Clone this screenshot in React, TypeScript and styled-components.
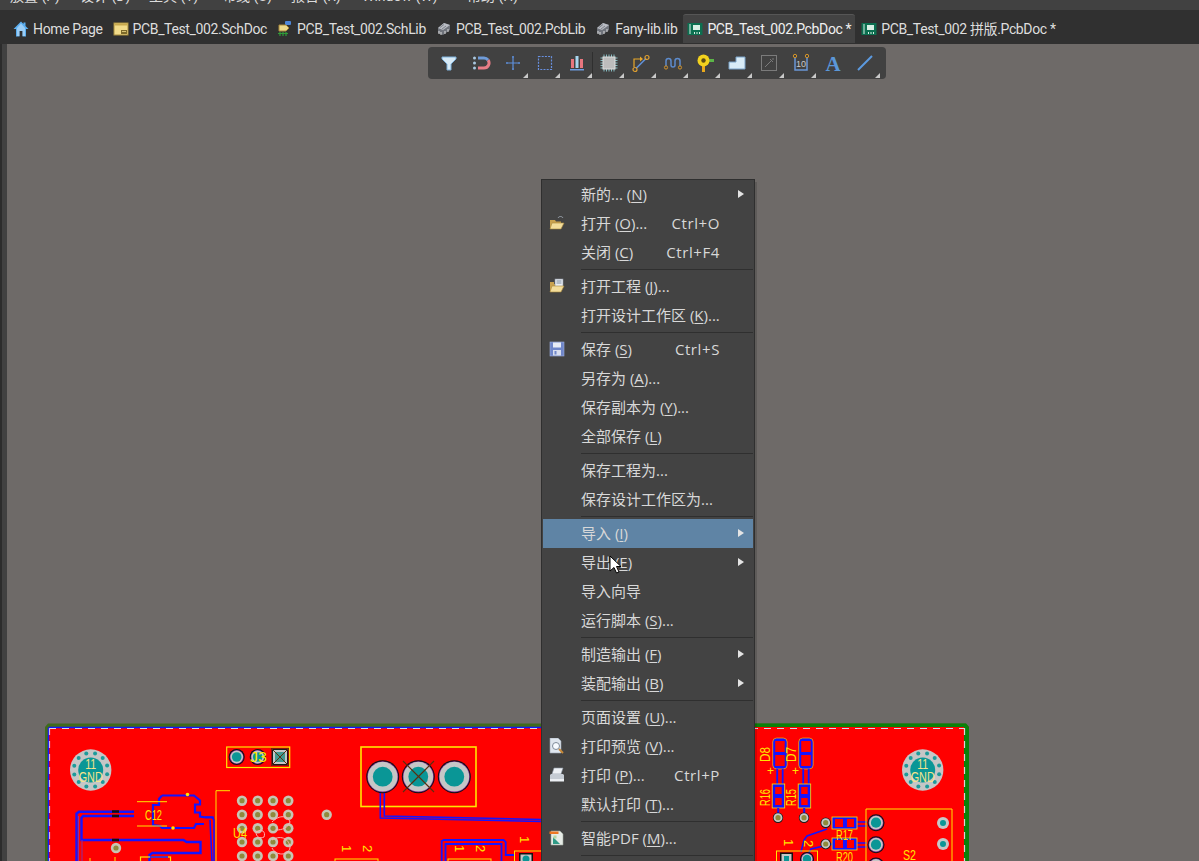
import React from 'react';
import styled, { createGlobalStyle } from 'styled-components';

const GlobalStyle = createGlobalStyle`
  html, body {
    margin: 0;
    height: 100%;
    overflow: hidden;
    background: #6e6a68;
  }
  #root {
    height: 100%;
  }
`;

const Page = styled.div`
  position: relative;
  display: flex;
  flex-direction: column;
  width: 1199px;
  height: 861px;
  overflow: hidden;
  font-family: Roboto, "Noto Sans CJK SC", sans-serif;
  color: #dcdcdc;
`;

const MenuBar = styled.div`
  flex: none;
  display: flex;
  height: 10px;
  overflow: hidden;
  background: #414141;
`;

const MenuBarItem = styled.span<{ $w: number }>`
  flex: none;
  width: ${(p) => p.$w}px;
  margin-top: -14px;
  font-size: 14px;
  line-height: 20px;
  white-space: nowrap;
  &:first-child {
    margin-left: 10px;
  }
`;

const TabBar = styled.div`
  flex: none;
  display: flex;
  gap: 2px;
  align-items: flex-end;
  height: 34px;
  padding: 0 0 1px 9px;
  box-sizing: border-box;
  background: #303030;
`;

const Tab = styled.div<{ $active?: boolean }>`
  display: flex;
  align-items: center;
  gap: 4px;
  height: 29px;
  padding: 0 4px;
  box-sizing: border-box;
  font-size: 14px;
  line-height: 20px;
  letter-spacing: -0.36px;
  white-space: nowrap;
  color: ${(p) => (p.$active ? '#f0f0f0' : '#dedede')};
  background: ${(p) => (p.$active ? '#434343' : 'transparent')};
  border-top: 1px solid ${(p) => (p.$active ? '#565656' : 'transparent')};
  border-radius: 3px 3px 0 0;
`;

const Workspace = styled.div`
  flex: 1;
  display: flex;
  min-height: 0;
`;

const LeftStrip = styled.div`
  flex: none;
  width: 7px;
  background: #414141;
  border-left: 2px solid #2c2c2c;
  box-sizing: border-box;
`;

const Canvas = styled.div`
  flex: 1;
  padding: 679px 0 0 38px;
  background: #6e6a68;
  overflow: hidden;
`;

const BoardSvg = styled.svg`
  display: block;
  width: 925px;
  height: 138px;
`;

const Toolbar = styled.div`
  position: absolute;
  top: 47px;
  left: 428px;
  display: flex;
  height: 32px;
  padding: 0 5px;
  background: #414141;
  border-radius: 4px;
`;

const ToolButton = styled.div<{ $corner?: boolean; $divider?: boolean }>`
  position: relative;
  display: flex;
  align-items: center;
  justify-content: center;
  width: 32px;
  height: 32px;
  &::before {
    content: '';
    display: ${(p) => (p.$corner ? 'block' : 'none')};
    position: absolute;
    right: 1px;
    bottom: 1px;
    border-style: solid;
    border-width: 0 0 5px 5px;
    border-color: transparent transparent #c9c9c9 transparent;
  }
  &::after {
    content: '';
    display: ${(p) => (p.$divider ? 'block' : 'none')};
    position: absolute;
    right: 0;
    top: 5px;
    bottom: 5px;
    width: 1px;
    background: #2f2f2f;
  }
`;

const Menu = styled.div`
  position: absolute;
  top: 179px;
  left: 541px;
  width: 214px;
  box-sizing: border-box;
  padding: 0 1px 12px;
  background: #434343;
  border: 1px solid #2f2f2f;
  box-shadow: 2px 3px 0 rgba(0, 0, 0, 0.14);
`;

const Row = styled.div<{ $on?: boolean }>`
  display: flex;
  align-items: center;
  height: 29px;
  box-sizing: border-box;
  padding: 0 9px 1px 6px;
  font-family: "Open Sans", "Noto Sans CJK SC", sans-serif;
  font-size: 15px;
  line-height: 20px;
  color: #d8d8d8;
  background: ${(p) => (p.$on ? '#5f84a5' : 'transparent')};
  u {
    text-underline-offset: 2px;
    text-decoration-thickness: 1px;
  }
`;

const RowIcon = styled.span`
  flex: none;
  display: flex;
  width: 16px;
  height: 16px;
  margin-right: 16px;
`;

const RowLabel = styled.span`
  flex: 1;
  white-space: nowrap;
`;

const Shortcut = styled.span`
  flex: none;
  white-space: nowrap;
  letter-spacing: 0.6px;
`;

const ArrowSlot = styled.span`
  flex: none;
  display: flex;
  justify-content: flex-end;
  width: 24px;
`;

const Arrow = styled.i<{ $show?: boolean }>`
  display: ${(p) => (p.$show ? 'block' : 'none')};
  border-style: solid;
  border-width: 4.5px 0 4.5px 6px;
  border-color: transparent transparent transparent #e4e4e4;
`;

const Separator = styled.div`
  height: 1px;
  margin: 2px 0 2px 38px;
  background: #2f2f2f;
`;

const Cursor = styled.svg`
  position: absolute;
  top: 555px;
  left: 609px;
  width: 13px;
  height: 19px;
`;

const BoardText = styled.text`
  font-family: 'Liberation Sans', sans-serif;
  fill: #ffe600;
`;

const HoleText = styled.text`
  font-family: 'Liberation Sans', sans-serif;
  fill: #f6e38c;
  text-anchor: middle;
`;

type Tool = { corner?: boolean; divider?: boolean; icon: React.ReactNode };

const Icon20 = ({ children }: { children: React.ReactNode }) => (
  <svg width="20" height="20" viewBox="0 0 20 20">{children}</svg>
);

const tools: Tool[] = [
  { icon: <Icon20><path d="M3 4h14v2l-5 5v6H8v-6L3 6z" fill="#d7eaf6" stroke="#7fb2dc" strokeWidth="1" /></Icon20> },
  { icon: (
    <Icon20>
      <circle cx="3.5" cy="5" r="1.5" fill="#a9c7df" />
      <circle cx="3.5" cy="10" r="1.5" fill="#a9c7df" />
      <circle cx="3.5" cy="15" r="1.5" fill="#a9c7df" />
      <path d="M7 15h6a5 5 0 0 0 4-8" fill="none" stroke="#e87d86" strokeWidth="3" />
      <path d="M7 5h6a5 5 0 0 1 4 2" fill="none" stroke="#6f9bd8" strokeWidth="3" />
    </Icon20>
  ) },
  { corner: true, icon: <Icon20><path d="M10 3v14M3 10h14" stroke="#5e90dc" strokeWidth="1.2" fill="none" /><path d="M9 4h2M9 16h2M4 9v2M16 9v2" stroke="#5e90dc" strokeWidth="1" fill="none" /></Icon20> },
  { corner: true, icon: <Icon20><rect x="3.5" y="3.5" width="13" height="13" fill="none" stroke="#6890e0" strokeWidth="1.2" strokeDasharray="2 1.2" /></Icon20> },
  { corner: true, divider: true, icon: (
    <Icon20>
      <rect x="4" y="6" width="3" height="9" fill="#e8767e" />
      <rect x="8.5" y="3" width="3" height="12" fill="#a7d6ef" />
      <rect x="13" y="6" width="3" height="9" fill="#e8767e" />
      <rect x="3" y="16" width="14" height="1.5" fill="#6d9be0" />
    </Icon20>
  ) },
  { corner: true, icon: (
    <Icon20>
      <path d="M5 1.5v17M7.5 1.5v17M10 1.5v17M12.5 1.5v17M15 1.5v17M1.5 5h17M1.5 7.5h17M1.5 10h17M1.5 12.5h17M1.5 15h17" stroke="#86bcc2" strokeWidth="1" />
      <rect x="4" y="4" width="12" height="12" fill="#bdbdbd" stroke="#dedede" />
    </Icon20>
  ) },
  { corner: true, icon: (
    <Icon20>
      <path d="M3 14V6h7" fill="none" stroke="#e8a72a" strokeWidth="1.2" />
      <path d="M9 3.5l3 2.5-3 2.5z" fill="#e8a72a" />
      <path d="M5 15.5L15 5.5" stroke="#5f8fd8" strokeWidth="1.6" />
      <circle cx="4" cy="16.5" r="2" fill="none" stroke="#e0a030" strokeWidth="1.2" />
      <circle cx="16" cy="4.5" r="2" fill="none" stroke="#e0a030" strokeWidth="1.2" />
    </Icon20>
  ) },
  { corner: true, icon: (
    <Icon20>
      <path d="M3 13V8a2.5 2.5 0 0 1 5 0v4a2 2 0 0 0 4 0V8a2.5 2.5 0 0 1 5 0v5" fill="none" stroke="#5d8bcc" strokeWidth="1.5" />
      <circle cx="3" cy="14.5" r="1.6" fill="none" stroke="#d3942a" />
      <circle cx="17" cy="14.5" r="1.6" fill="none" stroke="#d3942a" />
    </Icon20>
  ) },
  { corner: true, icon: (
    <Icon20>
      <rect x="7" y="13" width="3" height="6" fill="#e9a91c" />
      <rect x="12" y="6" width="7" height="3" fill="#5bb548" />
      <circle cx="8.5" cy="7.5" r="6" fill="#f3d21e" />
      <circle cx="8.5" cy="7.5" r="2.2" fill="#5c4b14" />
    </Icon20>
  ) },
  { corner: true, icon: <Icon20><path d="M2 9h7V4h9v12H2z" fill="#d9ecf7" stroke="#7aa3c9" strokeWidth="1" /></Icon20> },
  { corner: true, icon: (
    <Icon20>
      <rect x="2.5" y="2.5" width="15" height="15" fill="none" stroke="#7b7b7b" />
      <path d="M6 14l6-6M11 6l3 3M14 5v2" stroke="#7b7b7b" strokeWidth="1" fill="none" />
    </Icon20>
  ) },
  { corner: true, icon: (
    <Icon20>
      <path d="M4 4v13h12V4" fill="none" stroke="#6a96d6" strokeWidth="1.5" />
      <circle cx="4" cy="3" r="1.7" fill="#414141" stroke="#d3942a" />
      <circle cx="16" cy="3" r="1.7" fill="#414141" stroke="#d3942a" />
      <text x="10" y="14" fontSize="9" textAnchor="middle" fill="#c9c9c9" fontFamily="Liberation Sans, sans-serif">10</text>
    </Icon20>
  ) },
  { icon: (
    <Icon20>
      <text x="10" y="18" fontSize="21" fontWeight="700" textAnchor="middle" fill="#5b97d8" fontFamily="Liberation Serif, serif">A</text>
    </Icon20>
  ) },
  { corner: true, icon: <Icon20><path d="M3 17L17 3" stroke="#5c9ae0" strokeWidth="2" /></Icon20> },
];

const Icon16 = ({ children }: { children: React.ReactNode }) => (
  <svg width="16" height="16" viewBox="0 0 16 16">{children}</svg>
);

const HomeIcon = () => (
  <Icon16>
    <path d="M8 0.5L0.5 8H3v7.5h3.5V10h3v5.5H13V8h2.5L12.5 5V1.5h-2v1.5z" fill="#5aaef0" />
    <path d="M8 2.5L4 7v8h2.5v-5h3v5H12V7z" fill="#cfe8fb" opacity="0.55" />
  </Icon16>
);

const SchDocIcon = () => (
  <Icon16>
    <rect x="1" y="2" width="14" height="12" fill="#f2dc8a" stroke="#a88d3c" />
    <rect x="1.5" y="2.5" width="13" height="2" fill="#c8a94e" />
    <rect x="8" y="9" width="6" height="4" fill="#7d6a2a" />
    <rect x="9" y="10" width="4" height="0.8" fill="#f2dc8a" />
  </Icon16>
);

const SchLibIcon = () => (
  <Icon16>
    <rect x="8" y="0" width="6" height="4" rx="1" fill="#4d86d8" />
    <path d="M2 4h7l3 3-3 3H2z" fill="#ecd98a" stroke="#a9893a" />
    <path d="M3 11v4M6 11v4M9 11v4M1 12.5h10" stroke="#2f9a38" strokeWidth="1.2" />
  </Icon16>
);

const PcbLibIcon = () => (
  <Icon16>
    <path d="M2 7l6-5 6 2v5l-7 5-5-2z" fill="#6f737b" />
    <path d="M2 7l6-5 6 2-7 5z" fill="#b9bcc3" />
    <path d="M4 6.5l4-3M6 8l4-3" stroke="#6f737b" strokeWidth="0.8" />
    <path d="M3 10v3M5 11v3M9 10v3M12 8v3" stroke="#dcdcdc" strokeWidth="1" />
  </Icon16>
);

const PcbDocIcon = () => (
  <Icon16>
    <rect x="0.5" y="2" width="15" height="12" fill="#0c6f50" />
    <rect x="6" y="4" width="7" height="5" fill="#d8efe4" />
    <path d="M2 4h2M2 6h2M2 8h2M2 10h2M2 12h2" stroke="#d8efe4" strokeWidth="1" />
    <path d="M7 11h1v2H7zM9.5 11h1v2h-1zM12 11h1v2h-1z" fill="#d8efe4" />
  </Icon16>
);

const OpenIcon = () => (
  <Icon16>
    <path d="M1 5h5l1 1.5h5V13H1z" fill="#c9a24f" />
    <path d="M3 8h12l-3 6H1z" fill="#f3dd9b" stroke="#a8873b" strokeWidth="0.6" />
    <path d="M9 3c1-2 4-2 5 0" fill="none" stroke="#9aa3ad" />
  </Icon16>
);

const ProjectIcon = () => (
  <Icon16>
    <path d="M1 4h4v2h3V13H1z" fill="#c9a24f" />
    <rect x="6" y="1" width="8" height="8" fill="#e9edf3" stroke="#8a93a0" strokeWidth="0.6" />
    <path d="M7.5 3h5M7.5 5h5" stroke="#7f8ea0" />
    <path d="M3 8h12l-3 6H1z" fill="#f3dd9b" stroke="#a8873b" strokeWidth="0.6" />
  </Icon16>
);

const SaveIcon = () => (
  <Icon16>
    <rect x="1" y="1" width="14" height="14" fill="#6f86c9" stroke="#9fb0dd" strokeWidth="0.6" />
    <rect x="4" y="1.5" width="8" height="5" fill="#e8ecf6" />
    <rect x="4" y="9" width="8" height="5.5" fill="#d8deee" />
    <rect x="5.5" y="10" width="2" height="3.5" fill="#6f86c9" />
  </Icon16>
);

const PreviewIcon = () => (
  <Icon16>
    <path d="M1 0h8l3 3v12H1z" fill="#dfe6ee" stroke="#9aa6b4" strokeWidth="0.6" />
    <circle cx="7" cy="8" r="3.5" fill="#f7fbff" stroke="#7e8a98" />
    <path d="M10 11l4 4" stroke="#c98a38" strokeWidth="2" />
  </Icon16>
);

const PrintIcon = () => (
  <Icon16>
    <path d="M5 1h9l-2 6H3z" fill="#eef1f5" stroke="#8b95a2" strokeWidth="0.6" />
    <path d="M2 7h12l1 1v5H1V8z" fill="#c6ccd4" />
    <rect x="1" y="12" width="14" height="2.5" fill="#eceff3" />
  </Icon16>
);

const PdfIcon = () => (
  <Icon16>
    <path d="M2 1h9l3 3v11H2z" fill="#e6ebe6" stroke="#9aa69a" strokeWidth="0.6" />
    <rect x="0.5" y="1.5" width="9" height="2.5" fill="#ee7722" />
    <path d="M4 14V7l7 7z" fill="#2f9a86" />
    <rect x="4.5" y="5.5" width="3" height="3" fill="#b6d8a0" />
  </Icon16>
);

type Item = { label: React.ReactNode; key2?: string; sub?: boolean; icon?: React.ReactNode; on?: boolean };

const groups: Item[][] = [
  [
    { label: <>新的... (<u>N</u>)</>, sub: true },
    { label: <>打开 (<u>O</u>)...</>, key2: 'Ctrl+O', icon: <OpenIcon /> },
    { label: <>关闭 (<u>C</u>)</>, key2: 'Ctrl+F4' },
  ],
  [
    { label: <>打开工程 (<u>J</u>)...</>, icon: <ProjectIcon /> },
    { label: <>打开设计工作区 (<u>K</u>)...</> },
  ],
  [
    { label: <>保存 (<u>S</u>)</>, key2: 'Ctrl+S', icon: <SaveIcon /> },
    { label: <>另存为 (<u>A</u>)...</> },
    { label: <>保存副本为 (<u>Y</u>)...</> },
    { label: <>全部保存 (<u>L</u>)</> },
  ],
  [
    { label: '保存工程为...' },
    { label: '保存设计工作区为...' },
  ],
  [
    { label: <>导入 (<u>I</u>)</>, sub: true, on: true },
    { label: <>导出 (<u>E</u>)</>, sub: true },
    { label: '导入向导' },
    { label: <>运行脚本 (<u>S</u>)...</> },
  ],
  [
    { label: <>制造输出 (<u>F</u>)</>, sub: true },
    { label: <>装配输出 (<u>B</u>)</>, sub: true },
  ],
  [
    { label: <>页面设置 (<u>U</u>)...</> },
    { label: <>打印预览 (<u>V</u>)...</>, icon: <PreviewIcon /> },
    { label: <>打印 (<u>P</u>)...</>, key2: 'Ctrl+P', icon: <PrintIcon /> },
    { label: <>默认打印 (<u>T</u>)...</> },
  ],
  [
    { label: <>智能PDF (<u>M</u>)...</>, icon: <PdfIcon /> },
  ],
];

const tabs = [
  { name: 'Home Page', icon: <HomeIcon /> },
  { name: 'PCB_Test_002.SchDoc', icon: <SchDocIcon /> },
  { name: 'PCB_Test_002.SchLib', icon: <SchLibIcon /> },
  { name: 'PCB_Test_002.PcbLib', icon: <PcbLibIcon /> },
  { name: 'Fany-lib.lib', icon: <PcbLibIcon /> },
  { name: 'PCB_Test_002.PcbDoc *', icon: <PcbDocIcon />, active: true },
  { name: 'PCB_Test_002 拼版.PcbDoc *', icon: <PcbDocIcon /> },
];

const menuNames: [string, number][] = [
  ['放置 (P)', 70], ['设计 (D)', 69], ['工具 (T)', 73], ['布线 (U)', 69],
  ['报告 (R)', 71], ['Window (W)', 105], ['帮助 (H)', 60],
];

const MountHole = ({ x, y }: { x: number; y: number }) => (
  <g>
    <circle cx={x} cy={y} r={20.7} fill="#c6c6c6" />
    <circle cx={x} cy={y} r={12.5} fill="#0a9696" />
    {Array.from({ length: 12 }, (_, i) => {
      const a = (i * Math.PI) / 6 + 0.26;
      return <circle key={i} cx={x + 17 * Math.cos(a)} cy={y + 17 * Math.sin(a)} r={2} fill="#1d9a9a" />;
    })}
    <HoleText x={x} y={y - 1} fontSize="14" textLength={11} lengthAdjust="spacingAndGlyphs">11</HoleText>
    <HoleText x={x} y={y + 12} fontSize="14" textLength={24} lengthAdjust="spacingAndGlyphs">GND</HoleText>
  </g>
);

const SmallPad = ({ x, y, dark }: { x: number; y: number; dark?: boolean }) => (
  <g>
    <circle cx={x} cy={y} r={5.2} fill={dark ? '#1a1a1a' : '#c8c4b4'} />
    {dark && <circle cx={x} cy={y} r={4.4} fill="#c6c6c6" />}
    <circle cx={x} cy={y} r={2.6} fill="#8f8a3c" />
  </g>
);

const BigPad = ({ x, y, r = 8 }: { x: number; y: number; r?: number }) => (
  <g>
    <circle cx={x} cy={y} r={r} fill="#111" />
    <circle cx={x} cy={y} r={r - 1} fill="#7a1f86" />
    <circle cx={x} cy={y} r={r - 1.6} fill="#c6c6c6" />
    <circle cx={x} cy={y} r={r * 0.6} fill="#0a9696" />
  </g>
);

const padRows = [800.7, 814.7, 828.3, 842, 856];
const padCols = [242, 257.7, 273, 288.3];

const Label = ({ x, y, len, children }: { x: number; y: number; len: number; children: string }) => (
  <BoardText x={x} y={y} fontSize={14} textLength={len} lengthAdjust="spacingAndGlyphs">{children}</BoardText>
);

const Vertical = ({ x, y, len, children }: { x: number; y: number; len: number; children: string }) => (
  <BoardText x={x} y={y} fontSize={14} textLength={len} lengthAdjust="spacingAndGlyphs" transform={`rotate(-90 ${x} ${y})`}>{children}</BoardText>
);

const Sideways = ({ x, y, children }: { x: number; y: number; children: string }) => (
  <BoardText x={x} y={y} fontSize={13} transform={`rotate(90 ${x} ${y})`}>{children}</BoardText>
);

const Board = () => (
  <BoardSvg viewBox="45 723 925 138">
    <path d="M45 861V727l3-3.5h918l3 3.5v134z" fill="#3f6b1c" />
    <path d="M755 723.5h211l3 3.5v134h-214z" fill="#0a800a" />
    <rect x="49" y="727" width="915" height="134" fill="#ff0000" />
    <path d="M49 727.5H541" stroke="#1414ff" strokeWidth="1.5" />
    <path d="M48.5 727.5V861" stroke="#1414ff" strokeWidth="1.5" />
    <path d="M49 728.5H964" stroke="#d8d8e8" strokeWidth="1.2" strokeDasharray="7 6" />
    <path d="M49.5 728V861" stroke="#d8b8d8" strokeWidth="1.2" strokeDasharray="7 6" />
    <path d="M964.5 728V861" stroke="#d8d8d8" strokeWidth="1.2" strokeDasharray="7 6" />

    <MountHole x={90.7} y={770} />
    <MountHole x={922.7} y={770} />

    {/* J3 header */}
    <rect x="226.7" y="747" width="63" height="20.5" fill="none" stroke="#ffe600" strokeWidth="1.2" />
    <BigPad x={236.7} y={757} />
    <BigPad x={257.7} y={757} />
    <rect x="271.5" y="748.5" width="17" height="17" fill="#1a1a1a" />
    <rect x="273" y="750" width="14" height="14" fill="#c6c6c6" />
    <rect x="275" y="752" width="10" height="10" fill="#3f9a90" />
    <path d="M271 748l18 18M289 748l-18 18" stroke="#5a2f10" strokeWidth="1" />
    <Label x={250} y={762} len={17}>J3</Label>

    {/* power connector */}
    <rect x="361" y="747" width="115" height="59.5" fill="none" stroke="#ffe600" strokeWidth="1.6" />
    <path d="M380.3 792v26l161 3.5M384.3 792v24l157 3.5" fill="none" stroke="#1414ff" strokeWidth="1.6" />
    <BigPad x={382.7} y={776.7} r={16.5} />
    <BigPad x={418.3} y={776.7} r={16.5} />
    <BigPad x={454.3} y={776.7} r={16.5} />
    <path d="M403 761l31 31M434 761l-31 31" stroke="#5a2f10" strokeWidth="1.2" />

    {/* C12 */}
    <path d="M162 795.5h32l6 5v4h-5v8h5v4l6 1h8M162 795.5l-3 3.5v6h-6v20l7 1 2 2h3M165 828h29l2-4h8" fill="none" stroke="#1414ff" strokeWidth="2.2" />
    <path d="M205 817h7l2 3v41M210 820l2 41" fill="none" stroke="#1414ff" strokeWidth="1.6" />
    <path d="M137 801.7h30M137 826h30" stroke="#ffe600" strokeWidth="1" />
    <Label x={145} y={820} len={17}>C12</Label>
    <circle cx="187.5" cy="794.5" r="1.8" fill="#ffe600" />
    <circle cx="173" cy="828" r="1.8" fill="#ffe600" />

    {/* left traces */}
    <path d="M134 811.7H79l-2.5 2V861" fill="none" stroke="#1414ff" strokeWidth="2.4" />
    <path d="M134 816H83l-1.5 2v22h102l3 2h14v11h-48l-3 2v6" fill="none" stroke="#1414ff" strokeWidth="2.4" />
    <path d="M82 840v21M78.5 816v45" fill="none" stroke="#8a2fa0" strokeWidth="1" />
    <path d="M112 811.5h7M112 816h7M112 840h7" stroke="#111" strokeWidth="2.4" />
    <SmallPad x={116} y={848} />
    <path d="M90 858v3M115 857v4" stroke="#ffe600" strokeWidth="1" />
    <rect x="140.5" y="857" width="30" height="8" fill="none" stroke="#ffe600" strokeWidth="1.2" />
    <path d="M150 857h18M154 853h10" stroke="#1414ff" strokeWidth="1.5" />

    {/* U4 */}
    <path d="M230 790.7h-14V861" fill="none" stroke="#ffe600" strokeWidth="1" />
    {padRows.map((y) => padCols.map((x) => <SmallPad key={`${x}-${y}`} x={x} y={y} />))}
    <SmallPad x={326.7} y={814.7} />
    <Label x={233} y={838} len={14}>U4</Label>
    <path d="M272 822c8-8 16-6 18 0-2 6-8 8-14 8M256 832c6-4 10 0 8 5-4 2-8 0-8-5M272 840c10-6 18 0 18 8-2 8-14 8-18 0" fill="none" stroke="#ffb0b0" strokeWidth="1" />

    {/* lower middle connectors */}
    <Sideways x={342} y={845}>1</Sideways>
    <Sideways x={363} y={845}>2</Sideways>
    <rect x="335" y="859" width="43" height="6" fill="none" stroke="#ffe600" strokeWidth="1" />
    <path d="M441.7 861v-20l2-1h60l2 2v13h9M445.5 861v-17h56v17" fill="none" stroke="#1414ff" strokeWidth="1.8" />
    <Sideways x={455} y={845}>1</Sideways>
    <Sideways x={476} y={845}>2</Sideways>
    <rect x="448" y="859" width="43" height="6" fill="none" stroke="#ffe600" strokeWidth="1" />
    <Sideways x={520} y={836}>1</Sideways>
    <rect x="514.5" y="851" width="27" height="12" fill="none" stroke="#ffe600" strokeWidth="1" />
    <rect x="519" y="853" width="14" height="12" fill="#111" />
    <rect x="520.5" y="854.5" width="11" height="9" fill="#c6c6c6" />
    <circle cx="526" cy="859" r="3.5" fill="#0a9696" />

    {/* LEDs and resistors */}
    {[772.7, 798.7].map((x) => (
      <g key={x}>
        <rect x={x} y="738" width="14.5" height="31" rx="4" fill="#1414ff" stroke="#ffa500" strokeWidth="0.8" />
        <rect x={x + 2.5} y="741" width="9.5" height="11" fill="#ff0000" />
        <rect x={x + 2.5} y="755" width="9.5" height="11" fill="#ff0000" />
        <path d={`M${x + 4.5} 769v16M${x + 10} 769v16`} stroke="#1414ff" strokeWidth="1.8" />
        <rect x={x - 0.5} y="784" width="12.5" height="24" fill="#1414ff" stroke="#ffe600" strokeWidth="0.8" />
        <rect x={x + 2.5} y="787" width="6.5" height="7" fill="#ff0000" />
        <rect x={x + 2.5} y="798" width="6.5" height="7" fill="#ff0000" />
        <path d={`M${x + 5.5} 808v6`} stroke="#1414ff" strokeWidth="2" />
      </g>
    ))}
    <Vertical x={770} y={762} len={15}>D8</Vertical>
    <Vertical x={796} y={762} len={15}>D7</Vertical>
    <BoardText x="767" y="775" fontSize="12">+</BoardText>
    <BoardText x="792" y="775" fontSize="12">+</BoardText>
    <Vertical x={770} y={806} len={17}>R16</Vertical>
    <Vertical x={796} y={806} len={17}>R15</Vertical>
    <SmallPad x={778} y={817.7} dark />
    <SmallPad x={804} y={817.7} dark />

    {/* R17 / R20 */}
    <path d="M801 852l3-12 3-4 20-7M807 856l4-7 30-7M857 822h10M857 826h10M857 843h10M857 847h10" fill="none" stroke="#1414ff" strokeWidth="1.6" />
    {[817, 838].map((y) => (
      <g key={y}>
        <rect x="832" y={y} width="25" height="12" fill="#1414ff" stroke="#ffe600" strokeWidth="0.8" />
        <rect x="835" y={y + 2} width="8" height="8" fill="#ff0000" />
        <rect x="847" y={y + 2} width="7" height="8" fill="#ff0000" />
      </g>
    ))}
    <SmallPad x={825.7} y={822.7} dark />
    <SmallPad x={825.7} y={844} dark />
    <Label x={836} y={840} len={17}>R17</Label>
    <Label x={836} y={862} len={17}>R20</Label>
    <Sideways x={784} y={839}>1</Sideways>
    <Sideways x={804} y={840}>2</Sideways>
    <rect x="776.5" y="851" width="41" height="14" fill="none" stroke="#ffe600" strokeWidth="1" />
    <rect x="780" y="852.5" width="13" height="12" fill="#111" />
    <rect x="781.5" y="854" width="10" height="9" fill="#c6c6c6" />
    <rect x="784" y="856" width="5" height="5" fill="#0a9696" />
    <BigPad x={807} y={859} r={7} />

    {/* S2 */}
    <path d="M866 861v-52h86v52" fill="none" stroke="#ffe600" strokeWidth="1" />
    <BigPad x={876} y={822.7} r={8.5} />
    <BigPad x={876} y={844.7} r={8.5} />
    <BigPad x={876} y={866} r={8.5} />
    <circle cx="943" cy="823" r="6" fill="#c6c6c6" />
    <circle cx="943" cy="823" r="3" fill="#0a9696" />
    <circle cx="943" cy="844" r="6" fill="#c6c6c6" />
    <circle cx="943" cy="844" r="3" fill="#0a9696" />
    <Label x={903} y={860} len={13}>S2</Label>
  </BoardSvg>
);

export default function App() {
  return (
    <Page>
      <GlobalStyle />
      <MenuBar>
        {menuNames.map(([name, w]) => (
          <MenuBarItem key={name} $w={w}>{name}</MenuBarItem>
        ))}
      </MenuBar>
      <TabBar>
        {tabs.map((t) => (
          <Tab key={t.name} $active={t.active}>
            {t.icon}
            <span>{t.name}</span>
          </Tab>
        ))}
      </TabBar>
      <Workspace>
        <LeftStrip />
        <Canvas>
          <Board />
        </Canvas>
      </Workspace>
      <Toolbar>
        {tools.map((t, i) => (
          <ToolButton key={i} $corner={t.corner} $divider={t.divider}>{t.icon}</ToolButton>
        ))}
      </Toolbar>
      <Menu>
        {groups.map((g, i) => (
          <React.Fragment key={i}>
            {g.map((item, j) => (
              <Row key={j} $on={item.on}>
                <RowIcon>{item.icon}</RowIcon>
                <RowLabel>{item.label}</RowLabel>
                {item.key2 && <Shortcut>{item.key2}</Shortcut>}
                <ArrowSlot><Arrow $show={item.sub} /></ArrowSlot>
              </Row>
            ))}
            <Separator />
          </React.Fragment>
        ))}
      </Menu>
      <Cursor viewBox="0 0 13 19">
        <path d="M1 1v15l4-3.5 2.5 5.5 2.500-1-2.500-5.500H12z" fill="#fff" stroke="#000" strokeWidth="1" />
      </Cursor>
    </Page>
  );
}
